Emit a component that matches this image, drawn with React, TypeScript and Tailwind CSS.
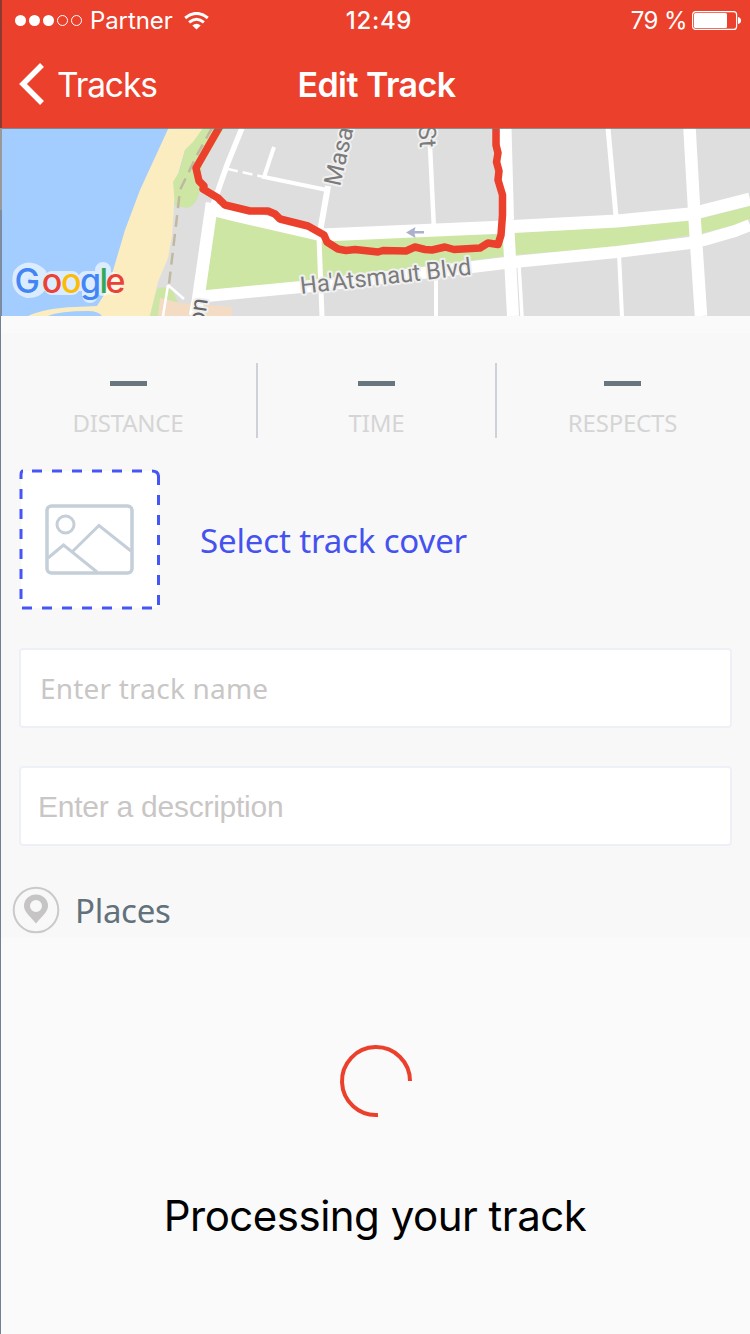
import type { ReactNode } from "react";

function StatusBar() {
  return (
    <div className="flex h-[42px] items-center pr-[9px] pl-[15px] text-[24px] leading-none">
      <div className="flex flex-1 items-center">
        <svg className="mr-[7px] h-3 w-[68px]" viewBox="0 0 68 12" fill="white">
          <circle cx="5.500" cy="5.500" r="5.500" />
          <circle cx="19.500" cy="5.500" r="5.500" />
          <circle cx="33.500" cy="5.500" r="5.500" />
          <circle cx="47.500" cy="5.500" r="5" fill="none" stroke="white" />
          <circle cx="61.500" cy="5.500" r="5" fill="none" stroke="white" />
        </svg>
        <span className="tracking-[-0.1px]">Partner</span>
        <svg className="ml-[11px] h-[18px] w-[25px]" viewBox="0 0 25 18" fill="none" stroke="white" strokeWidth="3">
          <path d="M1.200 6 Q12.500 -3.200 23.800 6" />
          <path d="M5.100 10.400 Q12.500 4.200 19.900 10.400" />
          <path d="M12.500 17.500 L8.300 13.400 Q12.500 10.200 16.700 13.400 Z" fill="white" stroke="none" />
        </svg>
      </div>
      <span className="ml-[2px] font-medium tracking-[0.7px]">12:49</span>
      <div className="flex flex-1 items-center justify-end">
        <span className="mr-[5px] tracking-[-0.6px]">79 %</span>
        <svg className="-mt-[2px] h-[19px] w-[49px]" viewBox="0 0 49 19">
          <rect x="0.600" y="0.600" width="44" height="17.800" rx="3" fill="none" stroke="white" strokeWidth="1.200" />
          <rect x="2" y="2" width="33" height="15" rx="1.500" fill="white" />
          <path d="M46 6 Q49 6.500 49 9.500 T46 13 Z" fill="white" />
        </svg>
      </div>
    </div>
  );
}

function NavBar() {
  return (
    <div className="flex h-[86px] items-center px-[19px] text-[34px] leading-none">
      <div className="flex flex-1 items-center">
        <svg className="mr-[13px] -mt-[2px] h-[42px] w-[25px]" viewBox="0 0 25 42" fill="none" stroke="white" strokeWidth="5.500">
          <path d="M23 2 L4 21 L23 40" />
        </svg>
        <span className="mt-[1px] text-[33.500px] tracking-[-1.100px]">Tracks</span>
      </div>
      <span className="ml-[3px] -mt-[1px] font-semibold tracking-[-0.550px]">Edit Track</span>
      <div className="flex-1" />
    </div>
  );
}

function TrackMap() {
  return (
    <svg className="block h-[188px] w-full" viewBox="0 128 750 188" fill="none">
      <rect x="0" y="128" width="750" height="188" fill="#dedede" />
      <path d="M0 128 H206 L185 150 L174 206 L150 316 H0 Z" fill="#a3ccff" />
      <path d="M168.500 128 H208 L185 150 L178 175 L174 206 L172 236 L168 258 L158 282 L150 316 H102 Q98 311 88 311 Q60 311 48 316 H28 Q45 308 75 307 L97 306 L104 295 L112 274 L125 230 L140 190 Z" fill="#fbedc0" />
      <path d="M203 128 H224 L202 165 L199 195 Q196 204 188 208 L175 206 L173 182 L179 172 L183 158 L185 150 L193 142 Z" fill="#cde6a4" />
      <path d="M150 316 L157 289 Q163 285 172 290 L178 302 L163 316 Z" fill="#cde6a4" />
      <path d="M160 298 L180 303 L232 307 V316 H158 Z" fill="#f3dcc3" />
      <path d="M214 215 L325 240 L324 280 L202 292 Z M320 238 L505 234 L514 233 L617 227 L689 220 L702 218 L750 206 V219 L735 225 L703 233 L617 247 L514 255 L320 280 Z" fill="#cde6a4" />
      <path d="M212 128 L197 155 L180 190 L176 225 L169 284" stroke="#c0b8a0" strokeWidth="2.500" strokeDasharray="12 7" />
      <g stroke="white">
        <path d="M242 128 L227 165 L213 205" strokeWidth="5.500" />
        <path d="M228 169 L264 177" strokeWidth="2.500" strokeDasharray="10 5" />
        <path d="M274 147 L264 177 L327 190" strokeWidth="4" />
        <path d="M328 186 L320 232" strokeWidth="6" />
        <path d="M319 238 L322 316" strokeWidth="5" />
        <path d="M430 146 L434 230" strokeWidth="4.500" />
        <path d="M436 270 V316" strokeWidth="4" />
        <path d="M505.500 128 L508 220 L513 316" strokeWidth="12" />
        <path d="M519 264 L522 316" strokeWidth="3.500" />
        <path d="M608 128 L616 216" strokeWidth="5" />
        <path d="M619 254 L622 316" strokeWidth="4" />
        <path d="M689.500 128 L695 225 L701 316" strokeWidth="12.500" />
        <path d="M212 203 L198 300 L195 316" strokeWidth="12.500" />
        <path d="M168 285 L184 299 M168 285 L163 316" strokeWidth="2.500" />
        <path d="M211 209 L235 215 L322 235 L505 227 L617 221 L690 214 L703 211 L750 199" strokeWidth="13" strokeLinejoin="round" />
        <path d="M197 297 L322 285 L514 262 L617 252 L690 243 L704 240 L735 231 L750 225" strokeWidth="12" strokeLinejoin="round" />
      </g>
      <path d="M406 232.500 L415.500 227 L414.500 231 H424 V233.500 H414.500 L415.500 238 Z" fill="#abb0cc" />
      <g fill="#7b7b7b" stroke="#f0f0f0" strokeWidth="4" strokeLinejoin="round" paintOrder="stroke" fontFamily="Roboto, sans-serif" fontSize="24">
        <text transform="translate(301 294) rotate(-6.500)" textLength="172" lengthAdjust="spacingAndGlyphs">Ha&apos;Atsmaut Blvd</text>
        <text transform="translate(340 187) rotate(-77)">Masada</text>
        <text transform="translate(418.500 126) rotate(86)">St</text>
        <text transform="translate(204 326) rotate(-82)" fill="#666666">on</text>
      </g>
      <path d="M220 126 L196 168 L199 181 L204 186 L203 189 L218 198 L225 205 L250 211 L268 211 L275 214 L280 219 L308 226 L324 235 L327 242 L338 249 L346 250.500 L355 249.500 L378 252 L383 250.500 L406 251 L415 247 L425 249.500 L432 250 L445 247 L454 249.500 L480 248 L488 243 L498 244.500 L501 235 L502.500 215 V195 L498 180 L499 171 L496.500 162 L498 153 L496 145 V126" stroke="#eb402c" strokeWidth="7.500" strokeLinejoin="round" />
      <path d="M39 275 Q28 266 21 275 Q18 287 28 290 Q38 290 39 283 H115 M90 283 V295 M103 270 V288 M52 279 H72 M52 287 H72 M86 279 H94 M113 280 V287" stroke="#ffffff" strokeOpacity="0.62" strokeWidth="16" strokeLinecap="round" strokeLinejoin="round" />
      <text y="292.500" fontFamily="Inter, sans-serif" fontSize="34" fontWeight="500">
        <tspan x="14.500" fill="#4285f4">G</tspan>
        <tspan x="41.800" fill="#ea4335">o</tspan>
        <tspan x="61" fill="#fbbc05">o</tspan>
        <tspan x="80" fill="#4285f4">g</tspan>
        <tspan x="99.500" fill="#34a853">l</tspan>
        <tspan x="105.500" fill="#ea4335">e</tspan>
      </text>
      <path d="M0 128.500 H750" stroke="#777777" strokeOpacity="0.8" />
      <path d="M1 128 V210" stroke="#999999" strokeWidth="2" />
      <path d="M1 210 V316" stroke="#7c8ba0" strokeWidth="2" />
    </svg>
  );
}

function Stat({ label }: { label: string }) {
  return (
    <div className="flex h-[75px] flex-col items-center">
      <div className="mt-[18px] h-[5px] w-[37px] bg-[#68767f]" />
      <span className="mt-[23px] text-[24px] leading-[28px] tracking-[-0.200px] text-[#d5d5d5]">{label}</span>
    </div>
  );
}

function Field({ children }: { children: ReactNode }) {
  return (
    <div className="flex h-20 items-center rounded-[4px] border-2 border-[#edf0f7] bg-white text-[#c9c6c6]">
      {children}
    </div>
  );
}

export default function App() {
  return (
    <div className="flex h-[1334px] w-[750px] flex-col overflow-hidden bg-[#fafafa] font-['Inter',sans-serif]">
      <header className="shrink-0 border-l-2 border-[#8c3a30] bg-[#eb402c] text-white">
        <div className="-ml-[2px]">
          <StatusBar />
          <NavBar />
        </div>
      </header>
      <TrackMap />
      <main className="flex flex-1 flex-col border-l border-[#728093]">
        <section className="mt-[17px] h-[605px] bg-[#f8f8f8] pr-[18px] pl-[18px] font-['Noto_Sans',sans-serif]">
          <div className="-mr-[18px] -ml-[19px] grid grid-cols-[256px_2px_237px_2px_251px] pt-[30px]">
            <Stat label="DISTANCE" />
            <div className="bg-[#cdd2d8]" />
            <Stat label="TIME" />
            <div className="bg-[#cdd2d8]" />
            <Stat label="RESPECTS" />
          </div>
          <div className="mt-[30px] flex items-center">
            <svg className="h-[142px] w-[142px]" viewBox="0 0 142 142" fill="none">
              <rect x="2" y="3" width="137.500" height="137" rx="4" fill="white" />
              <g stroke="#4655f5" strokeWidth="3">
                <path d="M2 11 V7 Q2 3 4 3" />
                <path d="M13 3 H125" strokeDasharray="10 10" />
                <path d="M133 3 Q139 3 139.500 8 V17" />
                <path d="M139.500 27 V138" strokeDasharray="10 10" />
                <path d="M2 21 V132" strokeDasharray="10 10" />
                <path d="M3 140 H134" strokeDasharray="10 10" />
              </g>
              <g stroke="#c4cfd9" strokeWidth="3.500">
                <rect x="28" y="38" width="85" height="67" rx="4.500" />
                <circle cx="46.500" cy="56.500" r="8.500" strokeWidth="3" />
                <path d="M29 90 L44.500 77 L78 104 M54 83 L80 57.500 L112 83" strokeWidth="3" />
              </g>
            </svg>
            <span className="mt-[3px] ml-[39px] text-[33px] tracking-[-0.150px] text-[#4652f0]">Select track cover</span>
          </div>
          <div className="mt-[38px] flex flex-col gap-[38px]">
            <Field>
              <span className="ml-[19px] text-[28px] tracking-[0.200px]">Enter track name</span>
            </Field>
            <Field>
              <span className="mt-[2px] ml-[17px] font-['Liberation_Sans',sans-serif] text-[30px] leading-none tracking-[-0.250px]">Enter a description</span>
            </Field>
          </div>
          <div className="mt-[40px] -ml-[7px] flex items-center">
            <svg className="h-[48px] w-[48px]" viewBox="0 0 48 48">
              <circle cx="24" cy="24" r="22.300" fill="none" stroke="#cbcaca" strokeWidth="2" />
              <path fillRule="evenodd" fill="#c6c4c4" d="M24 37.500 C17 29 12 25.500 12 20 A12 11.500 0 0 1 36 20 C36 25.500 31 29 24 37.500 Z M24 14 A6 6 0 1 0 24 26 A6 6 0 1 0 24 14 Z" />
            </svg>
            <span className="ml-[15px] text-[33px] leading-none tracking-[-0.300px] text-[#62717b]">Places</span>
          </div>
        </section>
        <section className="flex flex-col items-center pt-[106px]">
          <svg className="h-[74px] w-[74px]" viewBox="0 0 74 74" fill="none">
            <path d="M71 37 A34 34 0 1 0 39 71" stroke="#eb402c" strokeWidth="4" />
          </svg>
          <p className="mt-[72px] mr-[1px] text-[42px] leading-[52px] tracking-[-0.500px] text-black">Processing your track</p>
        </section>
      </main>
    </div>
  );
}
